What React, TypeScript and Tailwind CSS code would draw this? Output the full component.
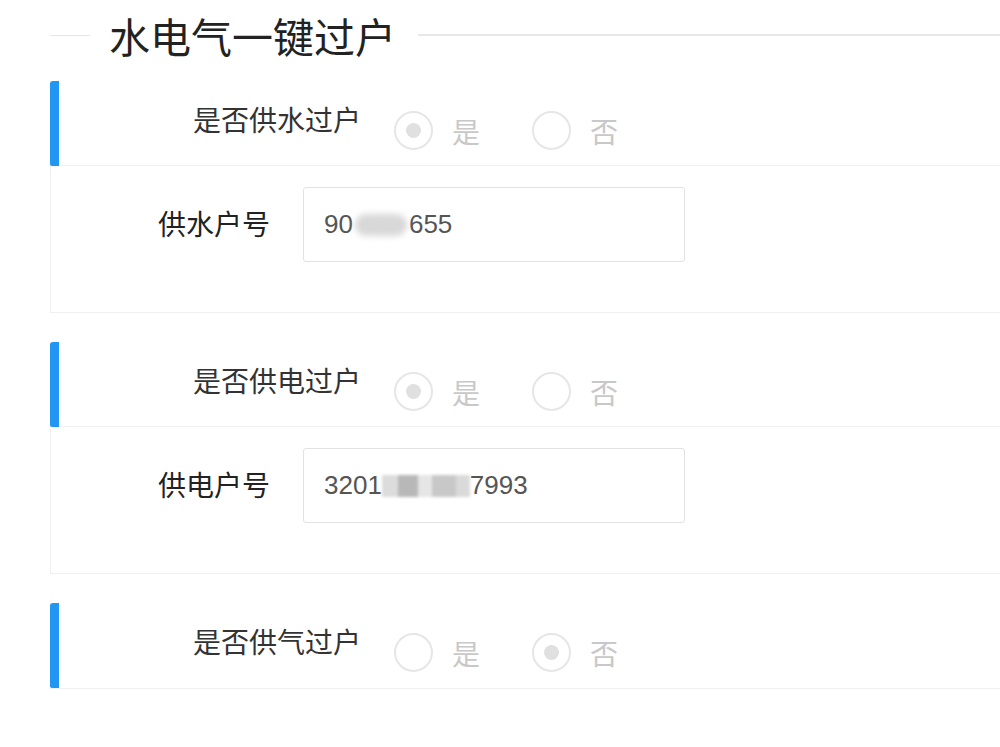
import React from 'react';

const cjk = { fontFamily: '"Noto Sans CJK SC", "Noto Sans", sans-serif' };
const num = { fontFamily: '"Liberation Sans", "Noto Sans CJK SC", sans-serif' };

function Radio({ checked, label }: { checked: boolean; label: string }) {
  return (
    <div className="flex items-center">
      <span className="flex h-[39px] w-[39px] items-center justify-center rounded-full border-2 border-[#e6e6e6]">
        {checked && <span className="h-[15px] w-[15px] rounded-full bg-[#e0e0e0]" />}
      </span>
      <span className="ml-[19px] text-[28px] leading-[28px] text-[#c8c8c8]">{label}</span>
    </div>
  );
}

function Section({
  title,
  yes,
  field,
  value,
}: {
  title: string;
  yes: boolean;
  field?: string;
  value?: React.ReactNode;
}) {
  return (
    <div className="relative bg-white border-l border-b border-[#f0f0f0]">
      <div className="absolute left-[-1px] top-0 h-[85px] w-[9px] rounded-tl-[3px] rounded-bl-[2px] bg-[#2196f3]" />
      <div className={`flex h-[85px] items-start ${field ? 'border-b border-[#f0f0f0]' : ''}`}>
        <div className="pl-[142px] pt-[24px] text-[28px] leading-[28px] text-[#333]">{title}</div>
        <div className="ml-[33px] flex gap-[52px] pt-[30px]">
          <Radio checked={yes} label="是" />
          <Radio checked={!yes} label="否" />
        </div>
      </div>
      {field && (
        <div className="flex h-[146px] items-start pt-[21px]">
          <div className="ml-[107px] w-[113px] pt-[22px] text-[28px] leading-[28px] text-[#222]">{field}</div>
          <div
            className="ml-[32px] flex h-[75px] w-[382px] items-center rounded-[3px] border border-[#e2e2e2] pl-[20px] text-[26px] text-[#555]"
            style={num}
          >
            {value}
          </div>
        </div>
      )}
    </div>
  );
}

export default function App() {
  return (
    <div className="min-h-[747px] w-[1000px] bg-white pl-[50px]" style={cjk}>
      <div className="flex h-[70px] items-center">
        <div className="h-px w-[40px] bg-[#e6e6e6]" />
        <div className="ml-[19px] mr-[22px] text-[41px] leading-[41px] text-[#222]">水电气一键过户</div>
        <div className="h-[2px] flex-1 bg-[#e8e8e8]" />
      </div>
      <div className="mt-[11px] flex flex-col gap-[29px]">
        <Section
          title="是否供水过户"
          yes
          field="供水户号"
          value={
            <>
              <span>90</span>
              <span className="mx-[2px] inline-block h-[22px] w-[52px] rounded-full bg-[#d8d8d8] blur-[3px]" />
              <span>655</span>
            </>
          }
        />
        <Section
          title="是否供电过户"
          yes
          field="供电户号"
          value={
            <>
              <span>3201</span>
              <span className="flex h-[22px] w-[88px] items-center blur-[1.5px]">
                <span className="h-full w-[16px] bg-[#dcdcdc]" />
                <span className="h-full w-[20px] bg-[#b8b8b8]" />
                <span className="h-full w-[14px] bg-[#e6e6e6]" />
                <span className="h-full w-[24px] bg-[#c8c8c8]" />
                <span className="h-full w-[14px] bg-[#dadada]" />
              </span>
              <span>7993</span>
            </>
          }
        />
        <Section title="是否供气过户" yes={false} />
      </div>
    </div>
  );
}
